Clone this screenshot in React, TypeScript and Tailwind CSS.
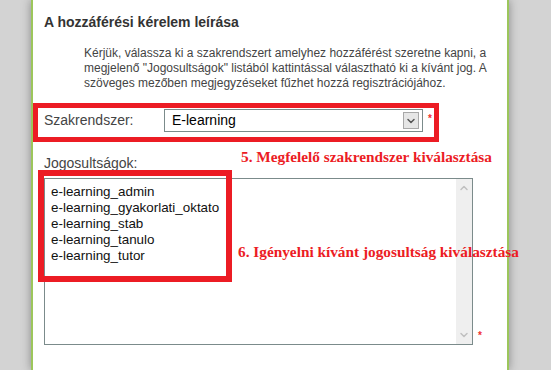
import { ChevronDown, ChevronUp } from "lucide-react";

const roles = [
  "e-learning_admin",
  "e-learning_gyakorlati_oktato",
  "e-learning_stab",
  "e-learning_tanulo",
  "e-learning_tutor",
];

export default function App() {
  return (
    <div className="h-[370px] w-[551px] overflow-hidden bg-[#d3d3d3] font-['Liberation_Sans',Arial,sans-serif]">
      <div className="relative ml-[31px] h-[370px] w-[478px] border-x-2 border-[#9cc65b] bg-white pl-[11px] pt-[13px] shadow-[0_0_9px_rgba(0,0,0,0.35)]">
        <h2 className="text-[14px] font-bold leading-[18px] text-[#333]">
          A hozzáférési kérelem leírása
        </h2>

        <p className="mt-[15px] pl-[40px] text-[12px] leading-[15px] text-[#444]">
          Kérjük, válassza ki a szakrendszert amelyhez hozzáférést szeretne kapni, a
          <br />
          megjelenő "Jogosultságok" listából kattintással választható ki a kívánt jog. A
          <br />
          szöveges mezőben megjegyzéseket fűzhet hozzá regisztrációjához.
        </p>

        {/* Szakrendszer select */}
        <div className="mt-[18px] flex items-center">
          <label className="w-[120px] text-[14px] text-[#444]">Szakrendszer:</label>
          <div className="flex h-[23px] w-[259px] items-center justify-between border border-[#7b8b8b] bg-white pl-[7px] pr-[3px]">
            <span className="text-[14px] text-black">E-learning</span>
            <span className="flex h-[17px] w-[16px] items-center justify-center border border-[#a8a8a8] bg-[#e6e6e6]">
              <ChevronDown className="h-[12px] w-[12px] text-[#555]" strokeWidth={3} />
            </span>
          </div>
          <span className="ml-[5px] -mt-[4px] text-[10px] font-bold text-[#f03030]">*</span>
        </div>

        {/* Jogosultságok list */}
        <label className="mt-[23px] block text-[14px] leading-[16px] text-[#444]">
          Jogosultságok:
        </label>
        <div className="mt-[7px] flex items-end">
          <div className="flex h-[167px] w-[429px] border border-[#7b8b8b] bg-white">
            <ul className="flex-1 pl-[6px] pt-[5px] text-[13.4px] leading-[16px] text-[#111]">
              {roles.map((r) => (
                <li key={r}>{r}</li>
              ))}
            </ul>
            <div className="flex w-[16px] flex-col items-center justify-between bg-[#efefef] py-[3px]">
              <ChevronUp className="h-[12px] w-[12px] text-[#c0c0c0]" strokeWidth={3} />
              <ChevronDown className="h-[12px] w-[12px] text-[#c0c0c0]" strokeWidth={3} />
            </div>
          </div>
          <span className="mb-[2px] ml-[5px] text-[10px] font-bold text-[#f03030]">*</span>
        </div>

        {/* annotations */}
        <div className="pointer-events-none absolute left-0 top-[103px] h-[39px] w-[406px] border-[5px] border-[#ec1c24]" />
        <div className="pointer-events-none absolute left-[5px] top-[170px] h-[112px] w-[194px] border-[6px] border-[#ec1c24]" />
        <div className="absolute left-[208px] top-[147px] whitespace-nowrap font-['Liberation_Serif',serif] text-[15.3px] font-bold leading-[20px] text-[#ec1c24]">
          5. Megfelelő szakrendszer kiválasztása
        </div>
        <div className="absolute left-[205px] top-[242px] z-10 whitespace-nowrap font-['Liberation_Serif',serif] text-[15.3px] font-bold leading-[20px] text-[#ec1c24]">
          6. Igényelni kívánt jogosultság kiválasztása
        </div>
      </div>
    </div>
  );
}
